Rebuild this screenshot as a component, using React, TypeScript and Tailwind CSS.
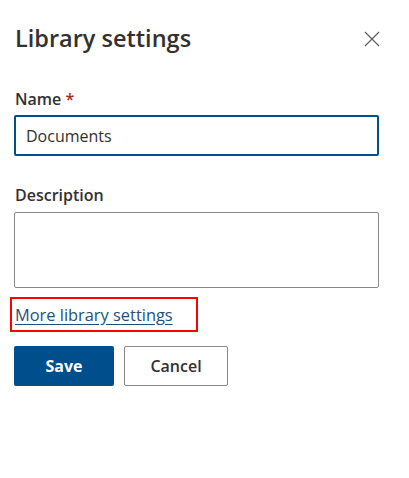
import React from 'react';

const font = { fontFamily: '"Open Sans", "Noto Sans", Arial, sans-serif' };

const CloseIcon: React.FC = () => (
  <svg width="16" height="16" viewBox="0 0 16 16" fill="none">
    <path d="M1 1L15 15M15 1L1 15" stroke="#605e5c" strokeWidth="1.2" />
  </svg>
);

const App: React.FC = () => {
  return (
    <div className="w-[409px] h-[478px] bg-white pl-[14px] pr-[30px] pt-[24px] text-[#323130]" style={font}>
      {/* header */}
      <div className="flex items-center justify-between h-[28px] pl-[1px]">
        <h1 className="text-[23.5px] leading-[28px] font-semibold">Library settings</h1>
        <button className="mr-[-1px] mt-[2px]">
          <CloseIcon />
        </button>
      </div>

      {/* name */}
      <label className="block mt-[36px] pl-[1px] text-[16px] leading-[22px] font-semibold">
        Name <span className="text-[#a4262c]">*</span>
      </label>
      <div className="mt-[5px] h-[41px] border-2 border-[#004e8c] rounded-[2px] flex items-center px-[10px]">
        <span className="text-[16px] text-[#323130]">Documents</span>
      </div>

      {/* description */}
      <label className="block mt-[28px] pl-[1px] text-[16px] leading-[22px] font-semibold">Description</label>
      <div className="mt-[6px] h-[76px] border border-[#8a8886] rounded-[2px]" />

      {/* link */}
      <div className="mt-[9px] ml-[-4px] w-[188px] h-[35px] border-2 border-[#ff0000] flex items-center pl-[3px]">
        <a href="#" className="text-[16.4px] leading-[22px] text-[#1f4f7a] underline underline-offset-[3px]">
          More library settings
        </a>
      </div>

      {/* actions */}
      <div className="mt-[14px] flex gap-[10px]">
        <button className="w-[100px] h-[40px] rounded-[2px] bg-[#004e8c] text-white text-[16px] font-bold">Save</button>
        <button className="w-[104px] h-[40px] rounded-[2px] border border-[#8a8886] bg-white text-[#323130] text-[16px] font-semibold">
          Cancel
        </button>
      </div>
    </div>
  );
};

export default App;
